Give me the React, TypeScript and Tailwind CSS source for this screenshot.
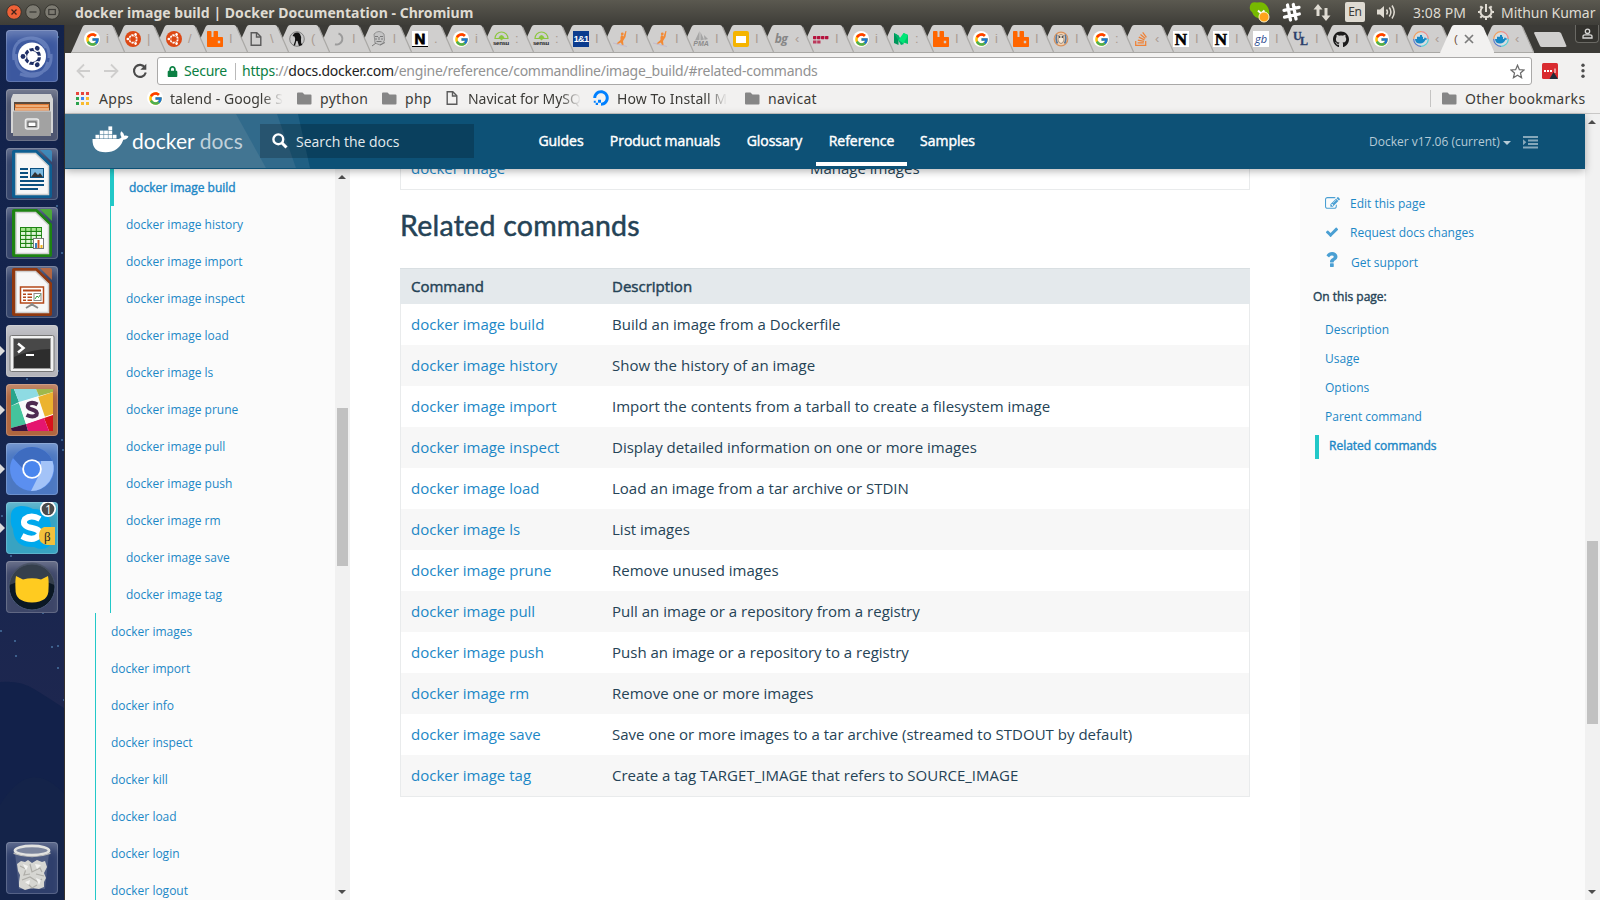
import React from "react";
import { FcGoogle } from "react-icons/fc";
import { FaGithub, FaStackOverflow, FaDigitalOcean, FaLock } from "react-icons/fa";

/* ---------- small icons ---------- */

const Google = () => (
  <span className="flex size-4 items-center justify-center rounded-full bg-white">
    <FcGoogle size={15} />
  </span>
);

const Ubuntu = () => (
  <svg width="16" height="16" viewBox="0 0 32 32">
    <circle cx="16" cy="16" r="16" fill="#dd4814" />
    <circle cx="16" cy="16" r="7.500" fill="none" stroke="#fff" strokeWidth="3.600" />
    {[0, 120, 240].map((a) => (
      <rect key={a} x="21" y="15.200" width="5.500" height="1.600" fill="#dd4814" transform={`rotate(${a} 16 16)`} />
    ))}
    {[60, 180, 300].map((a) => (
      <g key={a} transform={`rotate(${a} 16 16)`}>
        <circle cx="26.300" cy="16" r="4.200" fill="#dd4814" />
        <circle cx="26.300" cy="16" r="2.700" fill="#fff" />
      </g>
    ))}
  </svg>
);

const Rabbit = () => (
  <svg width="16" height="16" viewBox="0 0 16 16">
    <path d="M0 0.8Q0 0 .8 0H3.700Q4.500 0 4.500 .8V6H6.500V.8Q6.500 0 7.300 0H10.200Q11 0 11 .8V6H15.200Q16 6 16 6.800V15.200Q16 16 15.200 16H.8Q0 16 0 15.200ZM10.800 9.800V12.200H13.200V9.800Z" fill="#ff6600" fillRule="evenodd" />
  </svg>
);

const PageIcon = () => (
  <svg width="12" height="16" viewBox="0 0 12 16" fill="none" stroke="#5a5a5a" strokeWidth="1.400">
    <path d="M1.200 1.700H6.800L10.800 5.700V14.300H1.200Z" />
    <path d="M6.500 2V6H10.800" />
  </svg>
);

const Penguin = () => (
  <svg width="16" height="16" viewBox="0 0 16 16">
    <circle cx="8" cy="8" r="7.300" fill="#c9c9c9" stroke="#777" strokeWidth=".9" />
    <path d="M5 2.500Q9 .5 11 3Q12.800 6 12 9Q11.500 12 13.500 14L10 15Q9 12 8.500 10Q7.500 9 7 11L6 14.500H4.500L6 10Q6.500 7 5.500 5.500L3.500 5Z" fill="#111" />
  </svg>
);

const Spinner = () => (
  <svg width="16" height="16" viewBox="0 0 16 16">
    <path d="M8.500 2.500A5.500 5.500 0 0 1 5 13.200" fill="none" stroke="#9b9b9b" strokeWidth="2" />
  </svg>
);

const Face = () => (
  <svg width="16" height="16" viewBox="0 0 16 16">
    <path d="M3 3Q8-2 13 3L13.500 9Q12 14 9 14L4 12Z" fill="#c4c4c4" stroke="#8b8b8b" strokeWidth=".9" />
    <path d="M4 5.500H7M9 5.500H12M8 6V9M5.500 10.500H10.500M1 15L5 12M9 14L14 11.500M4 8H6M10 8H12" stroke="#7a7a7a" strokeWidth="1" />
  </svg>
);

const LetterN = () => (
  <span className="flex size-4 items-center justify-center bg-white font-['Liberation_Serif',serif] text-[17px] leading-none font-bold text-black [-webkit-text-stroke:0.6px_#000]">N</span>
);
const SansN = () => (
  <span className="flex size-4 items-center justify-center border-b border-black bg-white font-['Liberation_Sans',sans-serif] text-[15px] leading-none font-bold text-black [-webkit-text-stroke:0.8px_#000]">N</span>
);

const Sensu = () => (
  <span className="flex size-4 flex-col items-center">
    <svg width="15" height="10" viewBox="0 0 15 10">
      <path d="M1 7.500A6.500 6.500 0 0 1 14 7.500Z" fill="none" stroke="#8cc63f" strokeWidth="1.200" />
      <path d="M4.500 6.500Q7.500 1.500 10.500 6.500L7.500 9.500Z" fill="#8cc63f" />
    </svg>
    <span className="-mt-[1px] font-['Liberation_Sans',sans-serif] text-[6px] leading-[6px] font-bold tracking-[-0.3px] text-[#222]">sensu</span>
  </span>
);

const OneAndOne = () => (
  <span className="flex size-4 items-center justify-center bg-[#0b3b8e] font-['Liberation_Sans',sans-serif] text-[9px] leading-none font-bold tracking-[-0.7px] text-white">1&amp;1</span>
);

const Runner = () => (
  <svg width="16" height="16" viewBox="0 0 16 16">
    <path d="M13.500 0L12.500 6L10 10L10.500 14L9 14.500L8 11.500L4 13.500L3.500 12.500L7.500 9L7.500 6L8.500 4L10.500 5.500L12.500 0Z" fill="#f28a35" />
    <circle cx="9.300" cy="3" r="1.400" fill="#f28a35" />
    <path d="M0 12L14 15.500" stroke="#c3bccd" strokeWidth="1.200" />
  </svg>
);

const Pma = () => (
  <span className="flex size-4 flex-col items-center">
    <svg width="15" height="10" viewBox="0 0 15 10">
      <path d="M5.500 0V9L1 9.500ZM6.500 1L10 8.500L6.500 9.500ZM10 4L14 8L10.500 9Z" fill="#a5a5a5" />
    </svg>
    <span className="-mt-[1px] font-['Liberation_Sans',sans-serif] text-[7px] leading-[7px] font-bold text-[#8c8c8c] italic">PMA</span>
  </span>
);

const Slides = () => (
  <span className="flex size-4 items-center justify-center rounded-[2px] bg-[#f5b400]">
    <span className="h-[7px] w-[10px] bg-white" />
  </span>
);

const Bg = () => <span className="font-['Open_Sans',sans-serif] text-[12px] leading-4 font-bold tracking-[-0.5px] text-[#868686] italic">bg</span>;
const Gb = () => <span className="flex size-4 items-center justify-center bg-white font-['Open_Sans',sans-serif] text-[11px] leading-4 text-[#2d4a8f] italic">gb</span>;

const RedDots = () => (
  <svg width="16" height="16" viewBox="0 0 16 16" fill="#b5133e">
    {[0, 4, 8, 12].map((x) => <rect key={x} x={x} y="5" width="3.400" height="3.200" rx=".6" />)}
    <path d="M0 9.500H3.500V12.500H0ZM4.200 9.500H7.500V12.500H4.200Z" opacity=".8" />
  </svg>
);

const MediumOld = () => (
  <svg width="16" height="16" viewBox="0 0 16 16">
    <path d="M1 2L5.500 4.500V14L1 12Z" fill="#00965a" />
    <path d="M1 2L5.500 4.500L10.500 12.500L11 13L8 14Z" fill="#00b36b" />
    <path d="M10.500 2L15 4V13L10.500 11.500Z" fill="#00c569" />
    <path d="M5.500 9L10.500 2L15 4L10.500 12.500Z" fill="#00e676" />
  </svg>
);

const Owl = () => (
  <svg width="16" height="16" viewBox="0 0 16 16">
    <circle cx="8" cy="8" r="6.800" fill="#f2d1b1" stroke="#d9925c" strokeWidth="1.200" />
    <path d="M4 3.500Q2 8 4.500 12.500M12 3.500Q14 8 11.500 12.500" fill="none" stroke="#54779c" strokeWidth="1.600" />
    <path d="M5.500 4.500Q8 2.500 10.500 4.500L11 9Q10 12.500 8 12.500Q6 12.500 5 9Z" fill="#f6e8d6" stroke="#7c6a5c" strokeWidth=".7" />
    <path d="M6.700 5V7M9.300 5V7" stroke="#444" strokeWidth="1.200" />
  </svg>
);

const Ul = () => (
  <span className="flex size-4 font-['Liberation_Serif',serif] text-[12px] leading-[11px] font-bold text-[#2b3f6b] [-webkit-text-stroke:0.3px_#2b3f6b]">
    <span className="w-[7px]">U</span>
    <span className="mt-[5px]">L</span>
  </span>
);

const Whale = ({ w, color }: { w: number; color: string }) => (
  <svg width={w} height={(w * 27) / 37} viewBox="0 0 37 27" fill={color}>
    <path d="M0.500 12.900H26.500Q29 12.500 29.500 11.200Q27.300 8 29.300 5.300Q31.800 7 32.300 9.800Q34.500 9.200 36.500 10.500Q35.200 13.500 31.300 13.700Q27 26 13.500 26.200Q0 26.200 0.500 12.900Z" />
    {[
      [3.500, 8.800], [7.800, 8.800], [12.100, 8.800], [16.400, 8.800], [20.700, 8.800],
      [7.800, 4.600], [12.100, 4.600], [16.400, 4.600], [16.400, 0.400],
    ].map(([x, y]) => <rect key={`${x}-${y}`} x={x} y={y} width="3.800" height="3.700" />)}
  </svg>
);

const DockerFav = () => (
  <svg width="16" height="16" viewBox="0 0 16 16">
    <circle cx="8" cy="8" r="7.300" fill="#d7dde0" />
    <path d="M8 .7A7.300 7.300 0 0 1 15.300 8" fill="none" stroke="#ef8f8c" strokeWidth="1.200" />
    <path d="M15.300 8A7.300 7.300 0 0 1 8 15.300" fill="none" stroke="#53cfd8" strokeWidth="1.200" />
    <path d="M8 15.300A7.300 7.300 0 0 1 .7 8" fill="none" stroke="#5577c9" strokeWidth="1.200" />
    <path d="M.7 8A7.300 7.300 0 0 1 8 .7" fill="none" stroke="#f0a060" strokeWidth="1.200" />
    <path d="M2 8H11Q11.500 6.500 12 6.300L13 7.500H14.500Q14 8.700 12.500 8.800Q11 12.500 7 12.500Q2.300 12.500 2 8ZM4 5.800H10V8H4ZM7 4H9V5.800H7Z" fill="#1488c6" />
  </svg>
);

/* ---------- desktop panel ---------- */

function TitleBar() {
  return (
    <header className="flex h-[25px] shrink-0 items-center bg-linear-to-b from-[#5b5950] to-[#3e3d38] pb-px font-['Noto_Sans','Open_Sans',sans-serif] text-[14px] text-[#dfdbd2]">
      <div className="flex w-[75px] gap-[3px] pl-[6px]">
        <svg width="16" height="16" viewBox="0 0 16 16">
          <circle cx="8" cy="8" r="7.300" fill="#ee6137" stroke="#36352f" />
          <path d="M5.500 5.500L10.500 10.500M10.500 5.500L5.500 10.500" stroke="#41231a" strokeWidth="1.300" />
        </svg>
        <svg width="16" height="16" viewBox="0 0 16 16">
          <circle cx="8" cy="8" r="7.300" fill="#7d7b72" stroke="#36352f" />
          <path d="M4.500 8H11.500" stroke="#3c3b37" strokeWidth="1.300" />
        </svg>
        <svg width="16" height="16" viewBox="0 0 16 16">
          <circle cx="8" cy="8" r="7.300" fill="#7d7b72" stroke="#36352f" />
          <rect x="4.800" y="5.500" width="6.500" height="5" fill="none" stroke="#3c3b37" strokeWidth="1.200" />
        </svg>
      </div>
      <h1 className="flex-1 text-[14px] font-bold tracking-[0.04px] whitespace-nowrap">docker image build | Docker Documentation - Chromium</h1>
      <div className="flex w-[351px] items-center">
        <span className="w-8">
          <svg width="22" height="22" viewBox="0 0 22 22">
            <path d="M1 5Q2 0 8 1.500Q15 0 18 5Q21 9 20 14L14 18Q5 18 3 11Q0 9 1 5Z" fill="#77b900" />
            <path d="M9 9.500L12 12.500L15.500 9.500" fill="none" stroke="#fff" strokeWidth="2" />
            <circle cx="15" cy="16" r="5" fill="#ffa31a" stroke="#fff3c8" strokeWidth="1" />
          </svg>
        </span>
        <span className="w-[32px]">
          <svg width="21" height="21" viewBox="0 0 21 21" fill="none" strokeLinecap="round" stroke="#fff" strokeWidth="3.300">
            <path d="M6.500 3L9.500 18M12.300 2.500L15 17M3 8.300L18 5.300M3.500 15.200L18.300 12" />
          </svg>
        </span>
        <span className="w-[32px]">
          <svg width="18" height="18" viewBox="0 0 18 18" fill="#dfdbd2">
            <path d="M5 1L9.500 6.500H6.500V13H3.500V6.500H.5ZM13 18L8.500 12.500H11.500V5H14.500V12.500H17.500Z" />
          </svg>
        </span>
        <span className="mr-[11px] flex h-[20px] w-[20px] items-center justify-center rounded-[2px] bg-[#dfdbd2] text-[12px] tracking-[-0.3px] text-[#3c3b37]">En</span>
        <span className="w-[37px]">
          <svg width="22" height="18" viewBox="0 0 22 18" fill="none" stroke="#dfdbd2" strokeWidth="1.500">
            <path d="M1 6.500H4L8 3V15L4 11.500H1Z" fill="#dfdbd2" stroke="none" />
            <path d="M10.500 6.500Q12.500 9 10.500 11.500M13.300 4.500Q16.500 9 13.300 13.500M16 2.500Q20.500 9 16 15.500" />
          </svg>
        </span>
        <span className="w-[64px] text-[14px] tracking-[0.05px] whitespace-nowrap">3:08 PM</span>
        <span className="w-[24px]">
          <svg width="18" height="18" viewBox="0 0 18 18" fill="none" stroke="#dfdbd2">
            <path d="M6 4A5.500 5.500 0 1 0 12 4" strokeWidth="2" />
            <path d="M9 1V9M1 9H3.500M14.500 9H17M3.300 3.300L5 5M14.700 3.300L13 5M3.300 14.700L5 13M14.700 14.700L13 13M9 14.500V17" strokeWidth="2" />
          </svg>
        </span>
        <span className="text-[14px] tracking-[-0.05px] whitespace-nowrap">Mithun Kumar</span>
      </div>
    </header>
  );
}

/* ---------- launcher ---------- */

type Tile = { art: React.ReactNode; bg: string; running?: boolean; active?: boolean };

const officeDoc = (main: string, dark: string, body: React.ReactNode) => (
  <svg width="52" height="52" viewBox="0 0 52 52">
    <path d="M8 2H31L46 17V48Q46 50 44 50H8Q6 50 6 48V4Q6 2 8 2Z" fill={dark} />
    <path d="M34 2H44Q46 2 46 4V14Z" fill={main} opacity=".85" />
    <path d="M10 5.500H29.500L42.500 18V46.500H10Z" fill="#f7f7f7" stroke="#cfcfcf" strokeWidth="1.500" />
    {body}
  </svg>
);

const tiles: Tile[] = [
  {
    bg: "bg-[#3c589f]",
    art: (
      <svg width="52" height="52" viewBox="0 0 52 52">
        <path d="M8 30Q5 8 27 8Q44 10 43 28M45 24Q47 44 24 44Q8 40 10 24M12 12Q30 2 40 18M14 44Q36 52 42 32" fill="none" stroke="#8ea5d6" strokeWidth="3" opacity=".45" />
        <circle cx="26" cy="26.500" r="14" fill="#fff" />
        <circle cx="26.500" cy="26.500" r="7" fill="none" stroke="#1f2f66" strokeWidth="3.200" />
        {[60, 180, 300].map((a) => (
          <g key={a} transform={`rotate(${a} 26.500 26.500)`}>
            <circle cx="36" cy="26.500" r="3.600" fill="#fff" />
            <circle cx="36" cy="26.500" r="2.400" fill="#1f2f66" />
            <rect x="16" y="25.700" width="6" height="1.600" fill="#fff" />
          </g>
        ))}
      </svg>
    ),
  },
  {
    bg: "bg-[#4d5570]",
    art: (
      <svg width="52" height="52" viewBox="0 0 52 52">
        <path d="M7 5H45L47 10V44H5V10Z" fill="#d5d5d5" />
        <rect x="8" y="13" width="36" height="12" fill="#5b4a3d" />
        <path d="M9 15H43V24H9Z" fill="#e07b35" />
        <path d="M10 17H42M9 20H43" stroke="#fbe3c0" strokeWidth="1.200" />
        <rect x="7" y="22" width="38" height="25" fill="#a2a2a2" />
        <path d="M7 22H45" stroke="#d5d5d5" />
        <rect x="19.500" y="30" width="13" height="10" rx="2" fill="#b7b7b7" stroke="#ededed" strokeWidth="1.600" />
        <rect x="22" y="33" width="8" height="4.500" fill="#fff" stroke="#555" />
      </svg>
    ),
  },
  {
    bg: "bg-[#35446b]",
    art: officeDoc("#3b8fc2", "#0e5e91", (
      <g fill="#0b5080">
        <path d="M14 20H22V22H14ZM14 24H22V26H14ZM14 28H22V30H14ZM14 32H38V34H14ZM14 36H38V38H14ZM14 40H32V42H14Z" />
        <rect x="24.500" y="20.500" width="13" height="9" fill="#7cb9e0" stroke="#0b5080" />
        <path d="M25 29L29 24L32 27L34 25L37 29Z" fill="#333" />
      </g>
    )),
  },
  {
    bg: "bg-[#35446b]",
    art: officeDoc("#4bb52f", "#1d8312", (
      <g>
        <rect x="14" y="20" width="22" height="21" fill="#1d8312" />
        {[21, 25, 29, 33, 37].map((y) => [15, 20.300, 25.600, 30.900].map((x) => (
          <rect key={`${x}-${y}`} x={x} y={y} width="4.200" height="2.900" fill={y === 21 ? "#a5e58e" : "#dff5d8"} />
        )))}
        <rect x="27.500" y="31.500" width="10" height="10" fill="#fff" stroke="#777" />
        <path d="M29 36H31V41H29Z" fill="#3a7ebd" />
        <path d="M31.500 33H33.500V41H31.500Z" fill="#d35b1e" />
        <path d="M34.500 38H36.500V41H34.500Z" fill="#f0b51d" />
      </g>
    )),
  },
  {
    bg: "bg-[#35446b]",
    art: officeDoc("#c66a3a", "#90380f", (
      <g>
        <rect x="14.500" y="21" width="23" height="16" fill="#fff" stroke="#b4481a" strokeWidth="1.500" />
        <path d="M17 23.500H35V25.500H17ZM17 27.500H20V29H17ZM21.500 27.500H26V29H21.500ZM17 30.500H20V32H17ZM21.500 30.500H26V32H21.500ZM17 33.500H20V35H17ZM21.500 33.500H26V35H21.500Z" fill="#b4481a" />
        <rect x="28" y="27.500" width="7" height="7" fill="#fff" stroke="#888" />
        <path d="M29 33L31 30L32.500 31.500L34.500 28.500" stroke="#2a9d3a" fill="none" />
        <path d="M26 37V39M20 42L26 38.500L32 42" stroke="#888" strokeWidth="2" fill="none" />
      </g>
    )),
  },
  {
    bg: "bg-[#b5b5bb]",
    running: true,
    art: (
      <svg width="52" height="52" viewBox="0 0 52 52">
        <rect x="4" y="10.500" width="44" height="36" rx="1.500" fill="#f1f1f1" stroke="#777" />
        <rect x="7.500" y="13.500" width="37" height="30" fill="#2d2d2d" stroke="#9a9a9a" />
        <path d="M8 14H44V24Q26 24 8 32Z" fill="#484848" />
        <path d="M12 18.500L17.500 23L12 27.500" fill="none" stroke="#fff" strokeWidth="2.500" />
        <path d="M20 30H28" stroke="#fff" strokeWidth="2" />
      </svg>
    ),
  },
  {
    bg: "bg-[#b0663f]",
    running: true,
    art: (
      <svg width="52" height="52" viewBox="0 0 52 52">
        <rect x="5" y="5" width="42" height="42" rx="3" fill="#fff" />
        <path d="M5 5H8L13 18L5 22Z" fill="#28a58c" />
        <path d="M8 5H30L33 12L13 18Z" fill="#8edbe3" />
        <path d="M30 5H47V8L33 12Z" fill="#9fb84c" />
        <path d="M47 8V30L38 33L32 13Z" fill="#ecb32e" />
        <path d="M5 22L13 19L20 40L5 44Z" fill="#45c49c" />
        <path d="M38 34L47 31V47H43Z" fill="#d8121b" />
        <path d="M20 40L38 34L43 47H22Z" fill="#e5156f" />
        <path d="M5 44L20 40L22 47H7Q5 47 5 44Z" fill="#3e1340" />
        <path d="M13 19L32 12.500L39 33L20 40Z" fill="#fafafa" />
        <path d="M31.500 20.500Q26 17.500 22.500 20Q20 24 26 25.500Q32 27 30.500 31Q27 34 20.500 31" fill="none" stroke="#4d2a51" strokeWidth="4" />
      </svg>
    ),
  },
  {
    bg: "bg-[#4c78c2]",
    running: true,
    active: true,
    art: (
      <svg width="52" height="52" viewBox="0 0 52 52">
        <circle cx="26" cy="26" r="22" fill="#5b8ff0" />
        <path d="M7 15A22 22 0 0 1 45 15L46.500 18H26L18 27Z" fill="#3e6cc0" />
        <path d="M46.500 18Q50 28 43.500 38.500Q36 48 25 48L35 28V18Z" fill="#a3c3f8" />
        <circle cx="26" cy="26" r="9.800" fill="#fff" />
        <circle cx="26" cy="26" r="8" fill="#4a86ee" />
      </svg>
    ),
  },
  {
    bg: "bg-[#38a3c2]",
    running: true,
    art: (
      <svg width="52" height="52" viewBox="0 0 52 52">
        <path d="M5 16Q4 5 15 4Q22 4 27 7Q45 7 45 27Q50 38 42 45Q36 49 28 45Q8 46 7 27Q4 22 5 16Z" fill="#00a8ec" />
        <path d="M34 17Q25 12 19 17Q15 24 26 26Q36 28 33 33.500Q27 40 16 34" fill="none" stroke="#fff" strokeWidth="6" />
        <path d="M38 25H49V43H41Q33 42 33 34Q33 27 38 25Z" fill="#f3c13c" />
        <text x="38" y="39" fontSize="13" fontFamily="Liberation Serif, serif" fill="#222">β</text>
        <circle cx="42" cy="7" r="7.200" fill="#4b4b4b" stroke="#fff" strokeWidth="1.700" />
        <text x="39" y="11.500" fontSize="12" fontFamily="Open Sans, sans-serif" fill="#fff">1</text>
      </svg>
    ),
  },
  {
    bg: "bg-[#3d4668]",
    art: (
      <svg width="52" height="52" viewBox="0 0 52 52">
        <circle cx="26" cy="26" r="23" fill="#0b1824" stroke="#4a5878" />
        <path d="M3.500 24A22.500 22.500 0 0 1 48.500 24Q26 14 3.500 24Z" fill="#47505e" opacity=".7" />
        <path d="M10 15L17 18.500Q26 16 35 18.500L42 15Q43 20 42.500 28Q43 41 26 41.500Q9 41 9.500 28Q9 20 10 15Z" fill="#ffcb20" />
      </svg>
    ),
  },
];

const trash: Tile = {
  bg: "bg-[#2f3f6c]",
  art: (
    <svg width="52" height="52" viewBox="0 0 52 52">
      <path d="M9 11L13 47H39L43 11Z" fill="#aab2c4" opacity=".25" />
      <path d="M11 22L15 19L19 20L22 18L26 21L31 18L36 20L39 19L41 25L38 31L40 36L38 40L38 45L33 47L26 46L19 48L13 45L13 40L14 33L12 29Z" fill="#d6d6d2" />
      <path d="M14 24L20 27L18 33L24 32M24 22L26 30L34 26L36 30M16 38L24 35L32 40L36 37M30 32L38 34M22 42L26 46L31 43" stroke="#aeada8" strokeWidth="1.200" fill="none" />
      <path d="M17 22L22 24L20 29ZM29 22L35 23L31 27ZM19 40L24 38L23 43ZM30 36L35 38L33 43Z" fill="#f3f3f1" />
      <ellipse cx="26" cy="8.500" rx="17" ry="4.600" fill="#7c859d" stroke="#e2e2e0" strokeWidth="2.800" />
      <path d="M7.500 10.500Q26 18 44.500 10.500V12Q26 18.500 7.500 12Z" fill="#bdbdbb" />
    </svg>
  ),
};

const LauncherTile = ({ art, bg, running, active }: Tile) => (
  <div className="relative">
    <div className={`size-[52px] rounded-[4px] shadow-[inset_0_0_0_1px_rgba(255,255,255,0.18),inset_0_10px_10px_-4px_rgba(255,255,255,0.25)] ${bg}`}>{art}</div>
    {running && <span className="absolute top-[21px] -left-[6px] border-y-[5px] border-l-[5px] border-y-transparent border-l-[#dcdcdc]" />}
    {active && <span className="absolute top-[21px] -right-[6px] border-y-[5px] border-r-[5px] border-y-transparent border-r-[#dcdcdc]" />}
  </div>
);

const stars = [[58, 12], [8, 183], [57, 181], [53, 163], [62, 228], [27, 354], [58, 346], [62, 415], [2, 491], [11, 531], [63, 425], [43, 588], [15, 616], [58, 621], [52, 622], [58, 643], [1, 606], [16, 631], [64, 675]];

function Launcher() {
  return (
    <aside className="relative flex w-[65px] shrink-0 flex-col justify-between overflow-hidden border-r border-[#37322f] bg-linear-to-b from-[#12224b] via-[#16264f] to-[#22274f] pt-[5px] pb-[6px] pl-[6px]">
      <svg className="absolute inset-0" width="65" height="875" viewBox="0 0 65 875">
        <path d="M0 657Q20 655 34 664Q52 675 65 684V875H0Z" fill="#12214a" />
        <path d="M0 780Q30 730 65 770V875H0Z" fill="#142349" />
        {stars.map(([x, y]) => <circle key={`${x}-${y}`} cx={x} cy={y} r="1" fill="#5b93c4" opacity=".7" />)}
      </svg>
      <div className="flex flex-col gap-[7px]">
        {tiles.map((t, i) => <LauncherTile key={i} {...t} />)}
      </div>
      <LauncherTile {...trash} />
    </aside>
  );
}

/* ---------- browser chrome ---------- */

const tabs: [React.ReactNode, string][] = [
  [<Google />, "i"], [<Ubuntu />, "|"], [<Ubuntu />, "/"], [<Rabbit />, "I"], [<PageIcon />, "\\"], [<Penguin />, "("],
  [<Spinner />, "I"], [<Face />, "l"], [<SansN />, "."], [<Google />, "i"], [<Sensu />, ":"], [<Sensu />, ":"],
  [<OneAndOne />, "I"], [<Runner />, "I"], [<Runner />, "I"], [<Pma />, "I"], [<Slides />, "I"], [<Bg />, "‹"],
  [<RedDots />, "I"], [<Google />, "i"], [<MediumOld />, ":"], [<Rabbit />, "I"], [<Google />, "i"], [<Rabbit />, "I"],
  [<Owl />, "I"], [<Google />, ":"], [<FaStackOverflow size={16} color="#ef8236" />, "‹"], [<LetterN />, "I"], [<LetterN />, "I"],
  [<Gb />, "I"], [<Ul />, "I"], [<FaGithub size={17} color="#1b1b1b" />, "I"], [<Google />, "I"], [<DockerFav />, "‹"],
  [null, "("], [<DockerFav />, "‹"],
];

function TabStrip() {
  return (
    <div className="flex h-7 items-end bg-[#3c3b37] pl-[6px]">
      {tabs.map(([icon, label], i) => {
        const active = icon === null;
        return (
          <div
            key={i}
            className={`relative flex h-7 w-[54px] shrink-0 items-center ${i < 9 ? "-mr-[13px]" : "-mr-[14px]"}`}
            style={{ zIndex: active ? 60 : 50 - i }}
          >
            <svg className="absolute inset-0" width="54" height="28" viewBox="0 0 54 28">
              <path d="M0 28L11.500 2Q12.500 0 14 0H40Q41.500 0 42.500 2L54 28Z" fill={active ? "#f2f1f0" : "#d0cfce"} />
              <path d="M42.500 2L54 28" stroke={active ? "#f2f1f0" : "#a9a8a5"} strokeWidth="1.200" fill="none" />
              {!active && <path d="M0 27.500H54" stroke="#a9a8a5" />}
            </svg>
            {active ? (
              <div className="relative flex items-center pl-[14px] font-['Liberation_Sans',sans-serif] text-[11px] text-[#6b4a33]">
                <span className="w-[4px]">{label}</span>
                <svg className="ml-[6px]" width="10" height="10" viewBox="0 0 10 10">
                  <path d="M1 1L9 9M9 1L1 9" stroke="#7b7b7b" strokeWidth="1.700" />
                </svg>
              </div>
            ) : (
              <div className="relative flex items-center pl-[13px] font-['Liberation_Sans',sans-serif] text-[13px] leading-4 text-[#ab9c93]">
                <span className="flex size-4 items-center justify-center">{icon}</span>
                <span className="ml-[6px] w-[5px]">{label}</span>
              </div>
            )}
          </div>
        );
      })}
      <svg className="mb-[6px] ml-[14px]" width="33" height="15" viewBox="0 0 33 15">
        <path d="M0 1Q0 0 1.500 0H25Q26.500 0 27.200 1.500L32.500 14Q32.500 15 31 15H8Q6.500 15 5.800 13.500Z" fill="#d0cfce" />
      </svg>
      <div className="mb-[10px] ml-[8px] flex h-[18px] w-6 items-center justify-center rounded-b-[4px] border border-t-0 border-[#6a6964] bg-[#33322e]">
        <svg width="11" height="11" viewBox="0 0 11 11" fill="none" stroke="#d8d8d6" strokeWidth="1.300">
          <circle cx="5.500" cy="3.300" r="2.200" />
          <path d="M1 10V8.500Q1 6.800 3 6.800H8Q10 6.800 10 8.500V10Z" />
        </svg>
      </div>
    </div>
  );
}

function Toolbar() {
  return (
    <div className="flex h-[32px] items-center bg-[#f2f1f0] pt-[4px] pl-[11px]">
      <div className="flex w-[81px] items-center">
        <svg className="mr-[13px]" width="15" height="16" viewBox="0 0 15 16" fill="none" stroke="#cfcecd" strokeWidth="1.800">
          <path d="M14 8H2M8 1.500L1.500 8L8 14.500" />
        </svg>
        <svg className="mr-[13px]" width="15" height="16" viewBox="0 0 15 16" fill="none" stroke="#cfcecd" strokeWidth="1.800">
          <path d="M0 8H13M7 1.500L13.500 8L7 14.500" />
        </svg>
        <svg width="16" height="16" viewBox="0 0 16 16">
          <path d="M13 4.500A6 6 0 1 0 13.800 9.500" fill="none" stroke="#4a4a4a" strokeWidth="2.100" />
          <path d="M14.300 0.800V6.800H8.300Z" fill="#4a4a4a" />
        </svg>
      </div>
      <div className="flex h-[28px] w-[1375px] items-center rounded-[3px] border border-[#aaa9a8] bg-white pr-[6px] pl-[9px] font-['Noto_Sans','Open_Sans',sans-serif] text-[14px]">
        <FaLock size={11} color="#0b8043" className="mr-[6px]" />
        <span className="w-[51px] pb-px tracking-[-0.22px] text-[#0b8043]">Secure</span>
        <span className="mr-[6px] h-[17px] w-px bg-[#b9b9b9]" />
        <span className="flex-1 pb-px tracking-[-0.24px] whitespace-nowrap text-[#929292]">
          <span className="text-[#0b8043]">https</span>://<span className="text-[#222]">docs.docker.com</span>/engine/reference/commandline/image_build/#related-commands
        </span>
        <svg width="15" height="15" viewBox="0 0 24 24" fill="none" stroke="#6b6b6b" strokeWidth="2">
          <path d="M12 2L15 9L22.500 9.600L16.800 14.500L18.500 22L12 18L5.500 22L7.200 14.500L1.500 9.600L9 9Z" />
        </svg>
      </div>
      <svg className="ml-[10px]" width="16" height="16" viewBox="0 0 16 16">
        <rect width="16" height="16" rx="1.500" fill="#d92b2f" />
        <path d="M2 7H4V9H2ZM5 7H7V9H5ZM8 7H10V9H8ZM12.500 5.500H13.500V10H12.500Z" fill="#fff" />
        <path d="M11.500 9L16 16H7.500Z" fill="#1f2c3a" />
      </svg>
      <svg className="ml-[22px]" width="6" height="16" viewBox="0 0 6 16" fill="#4d4d4d">
        <circle cx="3" cy="2.200" r="1.700" /><circle cx="3" cy="7.700" r="1.700" /><circle cx="3" cy="13.200" r="1.700" />
      </svg>
    </div>
  );
}

const Folder = () => (
  <svg className="shrink-0" width="15" height="13" viewBox="0 0 15 13" fill="#868686">
    <path d="M0 1.500Q0 .5 1 .5H5.500L7.500 2.500H13.500Q14.500 2.500 14.500 3.500V11.500Q14.500 12.500 13.500 12.500H1Q0 12.500 0 11.500Z" />
  </svg>
);

const fade = "w-fit [mask-image:linear-gradient(to_right,#000_82%,transparent)]";

function BookmarkBar() {
  return (
    <div className="flex h-[29px] items-center border-b border-[#c9c8c7] bg-[#f2f1f0] pb-[2px] pl-[11px] font-['Noto_Sans','Open_Sans',sans-serif] text-[14px] tracking-[0.3px] whitespace-nowrap text-[#3c3b37]">
      <div className="flex w-[71px] items-center gap-[10px]">
        <svg width="13" height="13" viewBox="0 0 13 13">
          {["#e8453c", "#e8453c", "#e8453c", "#2ba24c", "#4285f4", "#f9bb2d", "#2ba24c", "#f9bb2d", "#f9bb2d"].map((c, i) => (
            <rect key={i} x={(i % 3) * 5} y={Math.floor(i / 3) * 5} width="3" height="3" fill={c} />
          ))}
        </svg>
        <span>Apps</span>
      </div>
      <div className="flex w-[150px] items-center gap-[7px]"><Google /><span className={`tracking-[0.05px] ${fade}`}>talend - Google S</span></div>
      <div className="flex w-[85px] items-center gap-[8px]"><Folder /><span>python</span></div>
      <div className="flex w-[64px] items-center gap-[8px]"><Folder /><span>php</span></div>
      <div className="flex w-[147px] items-center gap-[10px]"><PageIcon /><span className={`tracking-[-0.05px] ${fade}`}>Navicat for MySQ</span></div>
      <div className="flex w-[152px] items-center gap-[8px]"><FaDigitalOcean size={16} color="#0080ff" /><span className={`tracking-[0.1px] ${fade}`}>How To Install M</span></div>
      <div className="flex flex-1 items-center gap-[8px]"><Folder /><span>navicat</span></div>
      <div className="flex w-[170px] items-center">
        <span className="mr-[11px] h-[17px] w-px bg-[#c5c4c3]" />
        <Folder />
        <span className="ml-[8px]">Other bookmarks</span>
      </div>
    </div>
  );
}

/* ---------- docs page ---------- */

const nav = [
  { label: "Guides", w: "w-[72px]" },
  { label: "Product manuals", w: "w-[136px]" },
  { label: "Glossary", w: "w-[83px]" },
  { label: "Reference", w: "w-[91px]" },
  { label: "Samples", w: "w-[81px]" },
];

function DocsHeader() {
  return (
    <div className="relative z-10 flex h-[55px] w-[1520px] shrink-0 bg-[#0d5176] text-white shadow-[0_2px_8px_rgba(0,0,0,0.3)]">
      <svg className="absolute inset-0" width="260" height="54" viewBox="0 0 260 54">
        <path d="M0 0H233L245 54H0Z" fill="#1f5f83" />
        <path d="M0 0H212L231 54H0Z" fill="#316a8b" />
        <path d="M0 0H171L201 54H0Z" fill="#427592" />
      </svg>
      <div className="relative flex w-[460px]">
        <div className="flex w-[195px] items-start pt-[12px] pl-[27px]">
          <Whale w={37} color="#fff" />
          <span className="mt-[2px] ml-[3px] font-['Lato',sans-serif] text-[21px] leading-[26px] tracking-[0.05px] whitespace-nowrap">
            docker <span className="text-[#c0d1db]">docs</span>
          </span>
        </div>
        <div className="mt-[10px] flex h-[34px] w-[214px] items-center bg-black/20 pl-[12px]">
          <svg width="16" height="16" viewBox="0 0 16 16" fill="none" stroke="#fff">
            <circle cx="6.300" cy="6.300" r="4.900" strokeWidth="2.400" />
            <path d="M10 10L14.500 14.500" strokeWidth="3" />
          </svg>
          <span className="ml-[8px] text-[14px] tracking-[0px] text-[#e4ebef]">Search the docs</span>
        </div>
      </div>
      <nav className="flex">
        {nav.map(({ label, w }) => (
          <a key={label} className={`flex h-[52px] items-center justify-center border-b-[4px] pt-[4px] text-[14px] tracking-[-0.04px] whitespace-nowrap [-webkit-text-stroke:0.45px_#fff] ${w} ${label === "Reference" ? "border-white" : "border-transparent"}`}>
            {label}
          </a>
        ))}
      </nav>
      <div className="ml-auto flex h-[55px] w-[216px] items-center text-[12px] text-[#b6cbd6]">
        <span className="mt-px whitespace-nowrap">Docker v17.06 (current)</span>
        <span className="mt-[3px] ml-[3px] border-x-[4px] border-t-[4px] border-x-transparent border-t-[#b6cbd6]" />
        <svg className="mt-px ml-[12px]" width="15" height="13" viewBox="0 0 15 13" fill="#86a8ba">
          <path d="M0 0H15V2H0ZM5 3.500H15V5.500H5ZM5 7H15V9H5ZM0 10.500H15V12.500H0ZM0 3.200L3.300 6.200L0 9.200Z" />
        </svg>
      </div>
    </div>
  );
}

const commands: [string, string][] = [
  ["build", "Build an image from a Dockerfile"],
  ["history", "Show the history of an image"],
  ["import", "Import the contents from a tarball to create a filesystem image"],
  ["inspect", "Display detailed information on one or more images"],
  ["load", "Load an image from a tar archive or STDIN"],
  ["ls", "List images"],
  ["prune", "Remove unused images"],
  ["pull", "Pull an image or a repository from a registry"],
  ["push", "Push an image or a repository to a registry"],
  ["rm", "Remove one or more images"],
  ["save", "Save one or more images to a tar archive (streamed to STDOUT by default)"],
  ["tag", "Create a tag TARGET_IMAGE that refers to SOURCE_IMAGE"],
];

function Scrollbar({ thumb }: { thumb: string }) {
  return (
    <div className="flex w-[15px] shrink-0 flex-col items-center bg-[#f1f1f1] pr-px">
      <span className="mt-[6px] border-x-[4px] border-b-[4px] border-x-transparent border-b-[#4d4d4d]" />
      <span className={`w-[11px] bg-[#c1c1c1] ${thumb}`} />
      <span className="mt-auto mb-[6px] border-x-[4px] border-t-[4px] border-x-transparent border-t-[#4d4d4d]" />
    </div>
  );
}

function SideNav() {
  return (
    <div className="flex w-[285px] shrink-0 bg-[#fbfbfb] text-[12px] text-[#1c87c6]">
      <div className="flex-1 overflow-hidden">
        <ul className="ml-[45px] border-l border-[#22c8c8]">
          {commands.map(([c], i) => (
            <li key={c} className={`flex h-[37px] items-center ${i === 0 ? "-ml-px border-l-[4px] border-[#22c8c8] pl-[15px] [-webkit-text-stroke:0.4px_#1c87c6]" : "pl-[15px]"}`}>
              docker image {c}
            </li>
          ))}
        </ul>
        <ul className="ml-[30px] border-l border-[#22c8c8]">
          {["images", "import", "info", "inspect", "kill", "load", "login", "logout"].map((c) => (
            <li key={c} className="flex h-[37px] items-center pl-[15px]">docker {c}</li>
          ))}
        </ul>
      </div>
      <Scrollbar thumb="mt-[229px] h-[158px]" />
    </div>
  );
}

function Main() {
  return (
    <main className="w-[950px] shrink-0 overflow-hidden bg-white pl-[50px] text-[15px] text-[#254356]">
      <div className="-mt-[20px] flex h-[41px] w-[850px] items-center border border-t-0 border-[#e9ebec] pb-[2px]">
        <span className="w-[409px] pl-[10px] text-[#1c87c6]">docker image</span>
        <span>Manage images</span>
      </div>
      <h2 className="mt-[17px] h-[61px] font-['Lato',sans-serif] text-[28.5px] leading-[36px] tracking-[0.25px] [-webkit-text-stroke:0.5px_#254356]">Related commands</h2>
      <div className="w-[850px] border border-[#e9ebec]">
        <div className="-mx-px -mt-px flex h-[36px] items-center border-t border-[#d9dfe2] bg-[#e4e9ec] pl-[11px] [-webkit-text-stroke:0.45px_#254356]">
          <span className="w-[201px]">Command</span>
          <span>Description</span>
        </div>
        {commands.map(([c, d], i) => (
          <div key={c} className={`flex h-[41px] items-center pl-[10px] ${i % 2 ? "bg-[#f7f7f7]" : "bg-white"}`}>
            <span className="w-[201px] text-[#1c87c6]">docker image {c}</span>
            <span className="tracking-[0.01px] whitespace-nowrap">{d}</span>
          </div>
        ))}
      </div>
    </main>
  );
}

const links = [
  {
    label: "Edit this page",
    cls: "h-[29px]",
    d: "M888 1184l116-116-152-152-116 116v56h96v96h56zm440-720q-16-16-33 1l-350 350q-17 17-1 33t33-1l350-350q17-17 1-33zm80 594v190q0 119-84.500 203.500t-203.500 84.500h-832q-119 0-203.500-84.500t-84.500-203.500v-832q0-119 84.500-203.500t203.500-84.500h832q63 0 117 25 15 7 18 23 3 17-9 29l-49 49q-14 14-32 8-23-6-45-6h-832q-66 0-113 47t-47 113v832q0 66 47 113t113 47h832q66 0 113-47t47-113v-126q0-13 9-22l64-64q15-15 35-7t20 29zm-96-738l288 288-672 672h-288v-288zm444 132l-92 92-288-288 92-92q28-28 68-28t68 28l152 152q28 28 28 68t-28 68z",
    icon: "-mt-px",
    size: 15,
  },
  {
    label: "Request docs changes",
    cls: "h-[29px]",
    d: "M1671 566q0 40-28 68l-724 724-136 136q-28 28-68 28t-68-28l-136-136-362-362q-28-28-28-68t28-68l136-136q28-28 68-28t68 28l294 295 656-657q28-28 68-28t68 28l136 136q28 28 28 68z",
    icon: "-mt-px",
    size: 14,
  },
  {
    label: "Get support",
    cls: "h-[30px] pt-px",
    d: "M1088 1256v240q0 16-12 28t-28 12h-240q-16 0-28-12t-12-28v-240q0-16 12-28t28-12h240q16 0 28 12t12 28zm316-600q0 54-15.500 101t-35 76.500-55 59.500-57.500 43.500-61 35.500q-41 23-68.500 65t-27.500 67q0 17-12 32.500t-28 15.500h-240q-15 0-25.500-18.500t-10.500-37.500v-45q0-83 65-156.500t143-108.500q59-27 84-56t25-76q0-42-46.500-74t-107.500-32q-65 0-108 29-35 25-107 115-13 16-31 16-12 0-25-8l-164-125q-13-10-15.500-25t5.500-28q160-266 464-266 80 0 161 31t146 83 106 127.500 41 158.500z",
    icon: "-mt-[6px] -ml-[4px] mr-px",
    size: 21,
  },
];

function RightRail() {
  return (
    <div className="w-[285px] shrink-0 bg-[#fbfbfb] pt-[20px] text-[12px] text-[#1c87c6]">
      {links.map(({ label, cls, d, size, icon }) => (
        <div key={label} className={`flex items-center pl-[25px] ${cls}`}>
          <span className={`flex h-5 items-center ${size === 21 ? "w-[26px]" : "w-[25px]"}`}>
            <svg className={icon} width={size} height={size} viewBox="0 0 1792 1792"><path d={d} fill="#4a9fd3" /></svg>
          </span>
          {label}
        </div>
      ))}
      <div className="mt-[4px] flex h-[31px] items-center pl-[13px] text-[#254356] [-webkit-text-stroke:0.4px_#254356]">On this page:</div>
      <div className="mt-[3px]">
        {["Description", "Usage", "Options", "Parent command"].map((t) => (
          <div key={t} className="flex h-[29px] items-center pl-[25px]">{t}</div>
        ))}
        <div className="mt-[4px] ml-[15px] flex h-[24px] items-center border-l-[4px] border-[#22c8c8] pb-[2px] pl-[10px] [-webkit-text-stroke:0.4px_#1c87c6]">Related commands</div>
      </div>
    </div>
  );
}

export default function App() {
  return (
    <div className="flex h-[900px] w-[1600px] flex-col overflow-hidden bg-white">
      <TitleBar />
      <div className="flex h-[875px]">
        <Launcher />
        <div className="flex w-[1535px] flex-col">
          <TabStrip />
          <Toolbar />
          <BookmarkBar />
          <div className="flex min-h-0 flex-1 font-['Open_Sans',sans-serif]">
            <div className="flex w-[1520px] flex-col">
              <DocsHeader />
              <div className="flex min-h-0 flex-1">
                <SideNav />
                <Main />
                <RightRail />
              </div>
            </div>
            <Scrollbar thumb="mt-[417px] h-[183px]" />
          </div>
        </div>
      </div>
    </div>
  );
}
